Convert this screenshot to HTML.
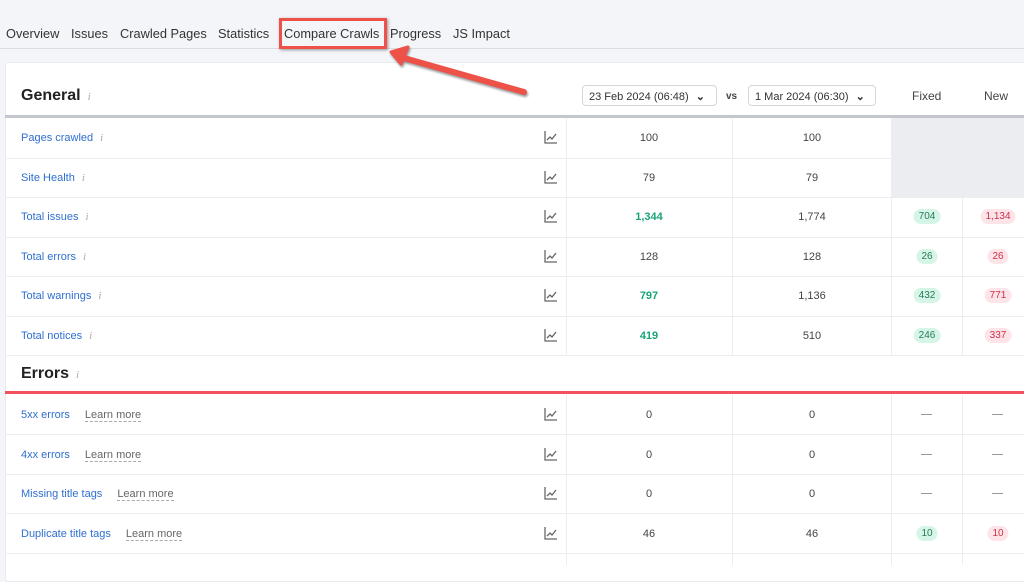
<!DOCTYPE html>
<html><head><meta charset="utf-8"><style>
*{box-sizing:border-box;margin:0;padding:0}
body{width:1024px;height:565px;overflow:hidden;background:#f4f5f9;font-family:"Liberation Sans",Arial,sans-serif;position:relative}
.tab{position:absolute;top:26px;font-size:12.8px;color:#333}
.card{position:absolute;left:5px;top:62px;width:1030px;height:520px;background:#fff;border:1px solid #e8e9ee;border-radius:3px}
.a{position:absolute}
.lbl{position:absolute;left:21px;font-size:11px;color:#2f6fd0;margin-top:1px}
.info{color:#aaa;font-family:"Liberation Serif",serif;font-style:italic;font-size:11px;margin-left:7px}
.lm{color:#666;border-bottom:1px dashed #aaa;margin-left:15px;font-size:11px}
.v{position:absolute;font-size:11px;color:#444;text-align:center;width:100px;margin-top:1px}
.g{color:#1aa37a;font-weight:bold}
.pill{position:absolute;font-size:10px;padding:2px 5px;border-radius:8px;transform:translateX(-50%)}
.pg{background:#d5f5e6;color:#2a7a5a}.pr{background:#fde4e8;color:#d0304a}
.dash{position:absolute;width:11px;height:1px;background:#999}
.row{position:absolute;left:5px;width:1019px;height:1px;background:#ececf1}
</style></head><body>
<div style="position:absolute;left:0;top:48px;width:1024px;height:1px;background:#dcdde2"></div>
<span class="tab" style="left:6px">Overview</span>
<span class="tab" style="left:71px">Issues</span>
<span class="tab" style="left:120px">Crawled Pages</span>
<span class="tab" style="left:218px">Statistics</span>
<span class="tab" style="left:284px">Compare Crawls</span>
<span class="tab" style="left:390px">Progress</span>
<span class="tab" style="left:453px">JS Impact</span>
<div class="card"></div>
<div class="a" style="left:279px;top:18px;width:108px;height:31px;border:3px solid #ee5148;box-shadow:1px 1px 3px rgba(0,0,0,.4)"></div>
<div class="a" style="left:21px;top:87px;font-size:16px;font-weight:bold;color:#222">General<span class="info" style="font-weight:normal">i</span></div>
<div class="a" style="left:582px;top:85px;width:135px;height:21px;border:1px solid #d4d6dc;border-radius:4px;font-size:11px;color:#333;padding:4px 6px">23 Feb 2024 (06:48) <b style="margin-left:4px">⌄</b></div>
<div class="a" style="left:726px;top:91px;font-size:10px;font-weight:bold;color:#444">vs</div>
<div class="a" style="left:748px;top:85px;width:128px;height:21px;border:1px solid #d4d6dc;border-radius:4px;font-size:11px;color:#333;padding:4px 6px">1 Mar 2024 (06:30) <b style="margin-left:4px">⌄</b></div>
<div class="a" style="left:912px;top:89px;font-size:12px;color:#444">Fixed</div>
<div class="a" style="left:984px;top:89px;font-size:12px;color:#444">New</div>
<div class="a" style="left:5px;top:115px;width:1019px;height:3px;background:#c3c6cd"></div>
<div class="a" style="left:891px;top:118px;width:133px;height:79px;background:#ecedf1"></div>
<div class="a" style="left:566px;top:118px;width:1px;height:237px;background:#ececf1"></div>
<div class="a" style="left:732px;top:118px;width:1px;height:237px;background:#ececf1"></div>
<div class="a" style="left:891px;top:197px;width:1px;height:158px;background:#ececf1"></div>
<div class="a" style="left:962px;top:197px;width:1px;height:158px;background:#ececf1"></div>
<div class="a" style="left:566px;top:395px;width:1px;height:170px;background:#ececf1"></div>
<div class="a" style="left:732px;top:395px;width:1px;height:170px;background:#ececf1"></div>
<div class="a" style="left:891px;top:395px;width:1px;height:170px;background:#ececf1"></div>
<div class="a" style="left:962px;top:395px;width:1px;height:170px;background:#ececf1"></div>
<div class="row" style="top:158px"></div><div class="row" style="top:197px"></div><div class="row" style="top:237px"></div><div class="row" style="top:276px"></div><div class="row" style="top:316px"></div><div class="row" style="top:355px"></div>
<div class="row" style="top:434px"></div><div class="row" style="top:474px"></div><div class="row" style="top:513px"></div><div class="row" style="top:553px"></div>
<div class="a" style="left:21px;top:365px;font-size:16px;font-weight:bold;color:#222">Errors<span class="info" style="font-weight:normal">i</span></div>
<div class="a" style="left:5px;top:391px;width:1019px;height:3px;background:#f2525e"></div>

<div class="lbl" style="top:131px">Pages crawled<span class="info">i</span></div>
<div class="lbl" style="top:171px">Site Health<span class="info">i</span></div>
<div class="lbl" style="top:210px">Total issues<span class="info">i</span></div>
<div class="lbl" style="top:250px">Total errors<span class="info">i</span></div>
<div class="lbl" style="top:289px">Total warnings<span class="info">i</span></div>
<div class="lbl" style="top:329px">Total notices<span class="info">i</span></div>
<div class="lbl" style="top:408px">5xx errors<span class="lm">Learn more</span></div>
<div class="lbl" style="top:448px">4xx errors<span class="lm">Learn more</span></div>
<div class="lbl" style="top:487px">Missing title tags<span class="lm">Learn more</span></div>
<div class="lbl" style="top:527px">Duplicate title tags<span class="lm">Learn more</span></div>

<svg class="a" style="left:0;top:0" width="1024" height="565">
<g fill="none" stroke="#666" stroke-width="1.3">
<path d="M545 131v12h12M547 140l3-3 2 2 4-5"/>
<path d="M545 171v12h12M547 180l3-3 2 2 4-5"/>
<path d="M545 210v12h12M547 219l3-3 2 2 4-5"/>
<path d="M545 250v12h12M547 259l3-3 2 2 4-5"/>
<path d="M545 289v12h12M547 298l3-3 2 2 4-5"/>
<path d="M545 329v12h12M547 338l3-3 2 2 4-5"/>
<path d="M545 408v12h12M547 417l3-3 2 2 4-5"/>
<path d="M545 448v12h12M547 457l3-3 2 2 4-5"/>
<path d="M545 487v12h12M547 496l3-3 2 2 4-5"/>
<path d="M545 527v12h12M547 536l3-3 2 2 4-5"/>
</g>
<g filter="drop-shadow(1px 2px 1px rgba(0,0,0,.4))">
<path d="M524 92L404 58" stroke="#ee5148" stroke-width="6" stroke-linecap="round"/>
<path d="M391 52L408 47L401 64Z" fill="#ee5148" stroke="#ee5148" stroke-width="3" stroke-linejoin="round"/>
</g>
</svg>

<div class="v" style="left:599px;top:131px">100</div><div class="v" style="left:762px;top:131px">100</div>
<div class="v" style="left:599px;top:171px">79</div><div class="v" style="left:762px;top:171px">79</div>
<div class="v g" style="left:599px;top:210px">1,344</div><div class="v" style="left:762px;top:210px">1,774</div>
<div class="v" style="left:599px;top:250px">128</div><div class="v" style="left:762px;top:250px">128</div>
<div class="v g" style="left:599px;top:289px">797</div><div class="v" style="left:762px;top:289px">1,136</div>
<div class="v g" style="left:599px;top:329px">419</div><div class="v" style="left:762px;top:329px">510</div>
<div class="v" style="left:599px;top:408px">0</div><div class="v" style="left:762px;top:408px">0</div>
<div class="v" style="left:599px;top:448px">0</div><div class="v" style="left:762px;top:448px">0</div>
<div class="v" style="left:599px;top:487px">0</div><div class="v" style="left:762px;top:487px">0</div>
<div class="v" style="left:599px;top:527px">46</div><div class="v" style="left:762px;top:527px">46</div>

<span class="pill pg" style="left:927px;top:209px">704</span><span class="pill pr" style="left:998px;top:209px">1,134</span>
<span class="pill pg" style="left:927px;top:249px">26</span><span class="pill pr" style="left:998px;top:249px">26</span>
<span class="pill pg" style="left:927px;top:288px">432</span><span class="pill pr" style="left:998px;top:288px">771</span>
<span class="pill pg" style="left:927px;top:328px">246</span><span class="pill pr" style="left:998px;top:328px">337</span>
<span class="pill pg" style="left:927px;top:526px">10</span><span class="pill pr" style="left:998px;top:526px">10</span>
<div class="dash" style="left:921px;top:414px"></div><div class="dash" style="left:992px;top:414px"></div>
<div class="dash" style="left:921px;top:454px"></div><div class="dash" style="left:992px;top:454px"></div>
<div class="dash" style="left:921px;top:493px"></div><div class="dash" style="left:992px;top:493px"></div>
</body></html>
